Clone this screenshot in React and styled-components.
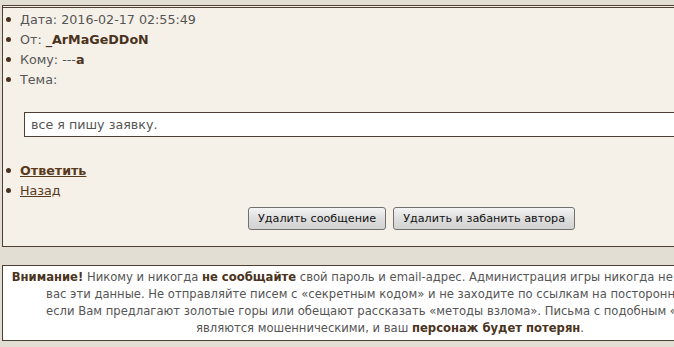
import React from 'react';
import styled, { createGlobalStyle } from 'styled-components';

const GlobalStyle = createGlobalStyle`
    html, body {
        margin: 0;
        padding: 0;
        background: #e2ded4;
        overflow: hidden;
    }
    body {
        font-family: "DejaVu Sans", Tahoma, sans-serif;
        font-size: 12.7px;
        color: #555;
    }
`;

const Page = styled.div`
    width: 776px;
    padding: 5px 0 0 2px;
`;

const Panel = styled.div`
    background: #f5f1e9;
    border: 1px solid #4d3f33;
    border-top: 3px double #4d3f33;
    padding: 2px 0 16px 0;
`;

const InfoList = styled.ul`
    list-style: none;
    margin: 0;
    padding: 0;
`;

const Item = styled.li`
    position: relative;
    height: 20px;
    line-height: 20px;
    padding-left: 17px;

    &::before {
        content: '';
        position: absolute;
        left: 3px;
        top: 7px;
        width: 5px;
        height: 5px;
        border-radius: 50%;
        background: #4a3320;
    }
`;

const Strong = styled.b`
    color: #4a3320;
`;

const MessageBox = styled.div`
    margin: 22px 0 24px 21px;
    height: 23px;
    line-height: 23px;
    border: 1px solid #4d3f33;
    background: #fff;
    padding-left: 6px;
`;

const Link = styled.a`
    color: #5a3a1c;
    text-decoration: underline;
    font-weight: ${p => (p.$bold ? 'bold' : 'normal')};
    cursor: pointer;
`;

const ButtonRow = styled.div`
    display: flex;
    gap: 7px;
    padding: 6px 0 0 245px;
`;

const Button = styled.button`
    font-family: "DejaVu Sans", Tahoma, sans-serif;
    font-size: 11.2px;
    color: #111;
    height: 23px;
    padding: 0 9px;
    border: 1px solid #707070;
    border-radius: 3px;
    background: linear-gradient(#f4f4f4, #dedede 50%, #d2d2d2);
`;

const Warning = styled.div`
    margin-top: 18px;
    background: #fff;
    border: 1px solid #4d3f33;
    padding: 3px 8px;
    text-align: center;
    font-size: 11.6px;
    line-height: 17px;
    white-space: nowrap;
`;

export default function App() {
    return (
        <Page>
            <GlobalStyle />
            <Panel>
                <InfoList>
                    <Item>Дата: 2016-02-17 02:55:49</Item>
                    <Item>От: <Strong>_ArMaGeDDoN</Strong></Item>
                    <Item>Кому: ---<Strong>a</Strong></Item>
                    <Item>Тема:</Item>
                </InfoList>
                <MessageBox>все я пишу заявку.</MessageBox>
                <InfoList>
                    <Item><Link $bold>Ответить</Link></Item>
                    <Item><Link>Назад</Link></Item>
                </InfoList>
                <ButtonRow>
                    <Button>Удалить сообщение</Button>
                    <Button>Удалить и забанить автора</Button>
                </ButtonRow>
            </Panel>
            <Warning>
                <Strong>Внимание!</Strong> Никому и никогда <Strong>не сообщайте</Strong> свой пароль и email-адрес. Администрация игры никогда не запрашивает у<br />
                вас эти данные. Не отправляйте писем с «секретным кодом» и не заходите по ссылкам на посторонние сайты,<br />
                если Вам предлагают золотые горы или обещают рассказать «методы взлома». Письма с подобным «текстом»<br />
                являются мошенническими, и ваш <Strong>персонаж будет потерян</Strong>.
            </Warning>
        </Page>
    );
}
